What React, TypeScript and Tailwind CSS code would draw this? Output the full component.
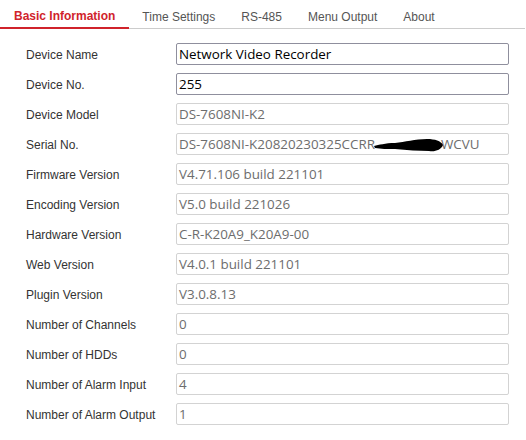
import React from "react";

const rows: { label: string; value: string; editable?: boolean }[] = [
  { label: "Device Name", value: "Network Video Recorder", editable: true },
  { label: "Device No.", value: "255", editable: true },
  { label: "Device Model", value: "DS-7608NI-K2" },
  { label: "Serial No.", value: "SERIAL" },
  { label: "Firmware Version", value: "V4.71.106 build 221101" },
  { label: "Encoding Version", value: "V5.0 build 221026" },
  { label: "Hardware Version", value: "C-R-K20A9_K20A9-00" },
  { label: "Web Version", value: "V4.0.1 build 221101" },
  { label: "Plugin Version", value: "V3.0.8.13" },
  { label: "Number of Channels", value: "0" },
  { label: "Number of HDDs", value: "0" },
  { label: "Number of Alarm Input", value: "4" },
  { label: "Number of Alarm Output", value: "1" },
];

const tabs = ["Basic Information", "Time Settings", "RS-485", "Menu Output", "About"];

export default function App() {
  return (
    <div className="w-[526px] h-[440px] bg-white overflow-hidden" style={{ fontFamily: '"Liberation Sans", Arial, sans-serif' }}>
      <div className="flex h-[29px] border-b border-[#cccccc] w-[525px]">
        {tabs.map((t, i) => (
          <div
            key={t}
            className={
              i === 0
                ? "px-[14px] pt-[7px] text-[12px] font-bold text-[#d0232b] border-b-2 border-[#d0232b] -mb-px"
                : "px-[13px] pt-[8px] text-[12px] text-[#555555]"
            }
          >
            {t}
          </div>
        ))}
      </div>
      <div className="pt-[10px]">
        {rows.map((r) => (
          <div key={r.label} className="flex items-center h-[30px]">
            <div className="w-[176px] pl-[26px] text-[12px] text-[#333333] pt-px">{r.label}</div>
            <div
              className={
                "relative w-[333px] h-[22px] border rounded-[2px] flex items-center pl-[2px] text-[13.4px] whitespace-nowrap overflow-hidden " +
                (r.editable ? "border-[#8f8f9d] text-black" : "border-[#d3d3d3] text-[#6d6d6d]")
              }
              style={{ fontFamily: '"Open Sans", "Noto Sans", sans-serif' }}
            >
              {r.value === "SERIAL" ? (
                <>
                  <span>DS-7608NI-K20820230325CCRR</span>
                  <span className="inline-block w-[66px]"></span>
                  <span>WCVU</span>
                  <svg className="absolute left-[196px] top-[3px]" width="72" height="18" viewBox="0 0 72 18">
                    <path
                      d="M1 9 C 6 8, 12 6, 22 6 C 32 5, 42 2, 54 2 C 62 2, 68 4, 70 8 C 68 13, 62 15, 56 14 C 46 14, 34 13, 22 12 C 14 12, 8 12, 2 11 Z"
                      fill="#000"
                    />
                  </svg>
                </>
              ) : (
                r.value
              )}
            </div>
          </div>
        ))}
      </div>
    </div>
  );
}
